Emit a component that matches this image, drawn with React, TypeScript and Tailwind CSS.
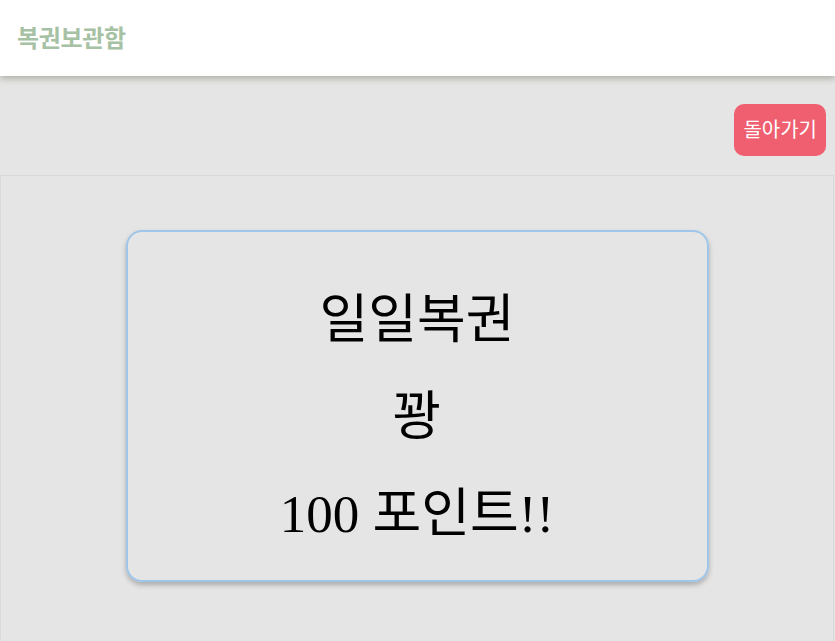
import React from "react";

export default function App() {
  return (
    <div className="min-h-[641px] bg-[#e5e5e5] flex flex-col" style={{ fontFamily: '"Noto Sans", "Noto Sans CJK KR", sans-serif' }}>
      <header className="h-[76px] bg-white flex items-center px-[17px] shadow-[0_3px_6px_rgba(120,120,100,0.45)] relative z-10">
        <span className="text-[24px] font-bold text-[#a7c1a4] tracking-[-0.3px]">복권보관함</span>
      </header>
      <div className="flex justify-end pt-[28px] pb-[19px] pr-[9px]">
        <button className="h-[52px] px-[9px] rounded-[10px] bg-[#ef5f70] text-white text-[20px]">돌아가기</button>
      </div>
      <section className="flex-1 border border-[#d9d9d9] border-b-0 mr-[1px] flex justify-center pt-[54px] pb-[59px]">
        <div
          className="w-[583px] h-[352px] rounded-[16px] border-2 border-[#9fc6ea] shadow-[0_3px_5px_rgba(0,0,0,0.25)] flex flex-col items-center pt-[56px] gap-[33px] text-black text-[53px] leading-[64px]"
          style={{ fontFamily: '"Liberation Serif", "Noto Sans CJK KR", serif' }}
        >
          <p>일일복권</p>
          <p>꽝</p>
          <p>100 포인트!!</p>
        </div>
      </section>
    </div>
  );
}
